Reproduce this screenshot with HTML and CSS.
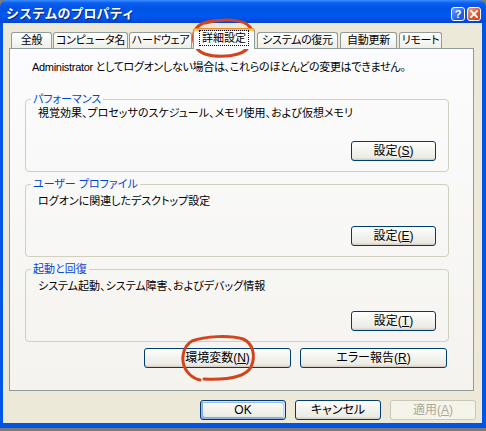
FILE: index.html
```html
<!DOCTYPE html>
<html lang="ja">
<head>
  <meta charset="UTF-8" />
  <title>システムのプロパティ</title>
  <link rel="stylesheet" href="styles.css">
</head>
<body>

  <div class="window">
    <!-- Title bar -->
    <div class="titlebar">
      <span class="title">システムのプロパティ</span>
      <div class="caption-btns">
        <span class="cap help">?</span>
        <span class="cap close">
          <svg width="8" height="8" viewBox="0 0 8 8"><path d="M1 1 L7 7 M7 1 L1 7" stroke="#fff" stroke-width="1.8" stroke-linecap="square"/></svg>
        </span>
      </div>
    </div>

    <div class="client">
      <!-- Tabs -->
      <div class="tabs">
        <div class="tab">全般</div>
        <div class="tab">コンピュータ名</div>
        <div class="tab">ハードウェア</div>
        <div class="tab active"><span class="focus">詳細設定</span></div>
        <div class="tab">システムの復元</div>
        <div class="tab">自動更新</div>
        <div class="tab">リモート</div>
      </div>

      <div class="pane">
        <p class="note">Administrator としてログオンしない場合は、これらのほとんどの変更はできません。</p>

        <fieldset class="group first">
          <legend>パフォーマンス</legend>
          <div class="group-body">
            <p class="desc">視覚効果、プロセッサのスケジュール、メモリ使用、および仮想メモリ</p>
            <div class="btn-row"><button class="btn">設定(<u>S</u>)</button></div>
          </div>
        </fieldset>

        <fieldset class="group">
          <legend>ユーザー プロファイル</legend>
          <div class="group-body">
            <p class="desc">ログオンに関連したデスクトップ設定</p>
            <div class="btn-row"><button class="btn">設定(<u>E</u>)</button></div>
          </div>
        </fieldset>

        <fieldset class="group">
          <legend>起動と回復</legend>
          <div class="group-body">
            <p class="desc">システム起動、システム障害、およびデバッグ情報</p>
            <div class="btn-row"><button class="btn">設定(<u>T</u>)</button></div>
          </div>
        </fieldset>

        <div class="pane-btns">
          <button class="btn wide">環境変数(<u>N</u>)</button>
          <button class="btn wide">エラー報告(<u>R</u>)</button>
        </div>
      </div>

      <div class="dialog-btns">
        <button class="btn default">OK</button>
        <button class="btn">キャンセル</button>
        <button class="btn" disabled>適用(<u>A</u>)</button>
      </div>
    </div>
  </div>

  <!-- red marker circles drawn over the screenshot -->
  <svg class="ink" width="486" height="431" viewBox="0 0 486 431">
    <path d="M205 23 C222 18 244 19 250 27 C255 36 252 50 238 54 C228 57 214 57 205 54 C196 51 192 42 194 33 C196 26 202 22 213 21" />
    <path d="M204 379 C225 380 245 378 251 367 C256 356 253 343 243 339 C230 335 205 336 192 341 C183 346 180 360 186 370 C190 376 195 379 200 380" />
  </svg>

</body>
</html>
```

FILE: styles.css
```css
/* Reset & Body */
* { box-sizing: border-box; }

body {
  margin: 0;
  position: relative;
  width: 486px;
  height: 431px;
  background: #7b7b7b;
  font-family: "Liberation Sans", "Noto Sans CJK JP", sans-serif;
  font-size: 11px;
  font-feature-settings: "palt";
  color: #000;
}

p { margin: 0; }

/* Window frame */
.window {
  width: 486px;
  height: 428px;
  display: flex;
  flex-direction: column;
}

.titlebar {
  height: 23px;
  padding: 5px 5px 0 6px;
  display: flex;
  align-items: center;
  justify-content: space-between;
  border-radius: 7px 7px 0 0;
  background: linear-gradient(to bottom, #3a8cff 0, #0a5fef 3px, #0054e6 8px, #0058ee 15px, #004fe0 20px, #0043cf 23px);
}

.title {
  color: #fff;
  font-weight: bold;
  font-size: 13px;
  font-feature-settings: normal;
  text-shadow: 1px 1px #0a1e8a;
  line-height: 16px;
}

.caption-btns {
  display: flex;
  gap: 2px;
}

.cap {
  width: 14px;
  height: 14px;
  border: 1px solid #fff;
  border-radius: 3px;
  display: flex;
  justify-content: center;
  align-items: center;
  color: #fff;
  font-weight: bold;
  font-size: 11px;
  line-height: 1;
}

.help { background: linear-gradient(135deg, #6ea2fb, #2463e8 60%, #1a52d8); }
.close { background: linear-gradient(135deg, #f0a284, #e0572f 55%, #c8401a); }

.client {
  flex: 1;
  background: #ece9d8;
  border: solid #0055e5;
  border-width: 0 4px 5px 3px;
  padding: 5px 8px 0 6px;
  display: flex;
  flex-direction: column;
}

/* Tabs */
.tabs {
  display: flex;
  align-items: flex-end;
  height: 21px;
  padding-left: 2px;
  margin-bottom: -1px;
  position: relative;
  z-index: 1;
}

.tab {
  flex: none;
  height: 16px;
  margin: 0 1px 1px 0;
  padding: 0;
  line-height: 15px;
  letter-spacing: -0.3px;
  text-align: center;
  border: 1px solid #919b9c;
  border-bottom: 0;
  border-radius: 3px 3px 0 0;
  background: linear-gradient(to bottom, #fff, #fafaf9 26%, #f0f0ea 95%, #ecebe5);
  white-space: nowrap;
}

.tab.active ~ .tab { margin-right: 2px; }

/* tab widths as in the original dialog */
.tab:nth-child(1) { width: 41px; }
.tab:nth-child(2) { width: 75px; }
.tab:nth-child(3) { width: 63px; }
.tab:nth-child(4) { width: 62px; }
.tab:nth-child(5) { width: 81px; }
.tab:nth-child(6) { width: 57px; }
.tab:nth-child(7) { width: 43px; }

.tab.active {
  height: 21px;
  margin: 0 2px 0 0;
  padding-top: 2px;
  border-top: 1px solid #e68b2c;
  box-shadow: inset 0 2px #ffc73c;
  background: #fcfcfe;
}

.focus {
  display: inline-block;
  padding: 0 2px;
  line-height: 14px;
  letter-spacing: 0;
  outline: 1px dotted #000;
  outline-offset: 0;
}

/* Tab pane */
.pane {
  height: 343px;
  border: 1px solid #919b9c;
  background: linear-gradient(to bottom, #fcfcfe, #f4f3ee);
  padding: 11px 24px 0 15px;
}

.note {
  line-height: 14px;
  margin-left: 7px;
  margin-bottom: 18px;
  letter-spacing: -0.3px;
  white-space: nowrap;
}

/* Group boxes */
.group {
  margin: 0 0 5px;
  padding: 0;
  min-width: 0;
  border: 1px solid #d0d0bf;
  border-radius: 4px;
}

.group legend {
  margin-left: 5px;
  padding: 0 2px;
  line-height: 14px;
  color: #0046d5;
}

.group-body {
  height: 65px;
  padding: 3px 12px 10px 12px;
  display: flex;
  flex-direction: column;
  justify-content: space-between;
}

.group.first .group-body { padding-top: 0; }

.desc { line-height: 14px; }

.btn-row {
  display: flex;
  justify-content: flex-end;
}

/* Buttons */
.btn {
  width: 85px;
  height: 20px;
  padding: 0;
  border: 1px solid #003c74;
  border-radius: 3px;
  background: linear-gradient(to bottom, #fff, #f4f4f0 40%, #ecebe6 85%, #d6d0c5);
  font: inherit;
  font-size: 12px;
  color: #000;
  line-height: 17px;
  box-shadow: inset 0 -1px #d6d0c5;
}

.btn u { text-underline-offset: 1px; }

.btn.wide { width: 147px; }

.btn.default {
  box-shadow: inset -1px 1px #cee7ff, inset 1px 2px #98b8ea, inset -2px 2px #bcd4f6, inset 1px -1px #89ade4, inset 2px -2px #89ade4;
}

.btn:disabled {
  border-color: #c9c7ba;
  color: #aca899;
  background: #f5f4ea;
  box-shadow: none;
}

.pane-btns {
  display: flex;
  justify-content: flex-end;
  gap: 9px;
  margin-top: 6px;
  padding-right: 2px;
}

.dialog-btns {
  display: flex;
  justify-content: flex-end;
  gap: 9px;
  margin: 9px -2px 0 0;
}

.dialog-btns .btn { width: 86px; }

/* Red marker overlay */
.ink {
  position: absolute;
  top: 0;
  left: 0;
  pointer-events: none;
}

.ink path {
  fill: none;
  stroke: #d3431c;
  stroke-width: 3;
  stroke-linecap: round;
}
```
